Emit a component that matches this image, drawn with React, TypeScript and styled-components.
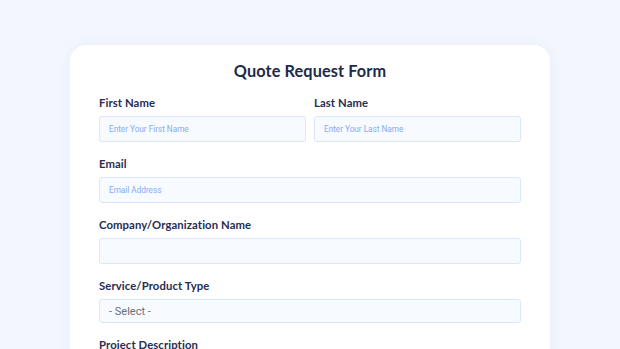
import styled, { createGlobalStyle } from 'styled-components'

const GlobalStyle = createGlobalStyle`
  html, body {
    margin: 0;
    padding: 0;
    height: 349px;
    overflow: hidden;
    background: #f3f6fd;
  }
  * {
    box-sizing: border-box;
  }
`

const Page = styled.div`
  width: 620px;
  height: 349px;
  padding-top: 45px;
  display: flex;
  justify-content: center;
  font-family: 'Lato', 'Noto Sans', sans-serif;
`

const Card = styled.form`
  width: 480px;
  height: 340px;
  background: #ffffff;
  border-radius: 16px;
  padding: 14px 29px 0;
  display: flex;
  flex-direction: column;
  gap: 13px;
  box-shadow: 0 0 12px rgba(180, 195, 230, 0.15);
`

const Title = styled.h1`
  margin: 0 0 -2px;
  font-size: 16.3px;
  line-height: 24px;
  font-weight: 700;
  color: #1e2a4a;
  text-align: center;
  letter-spacing: 0.1px;
`

const Row = styled.div`
  display: grid;
  grid-template-columns: 1fr 1fr;
  gap: 8px;
`

const Field = styled.div`
  display: flex;
  flex-direction: column;
  gap: 6px;
`

const Label = styled.label`
  font-size: 11.3px;
  line-height: 16px;
  font-weight: 700;
  color: #272d52;
  letter-spacing: 0.1px;
  padding-top: 1px;
  margin-bottom: -1px;
`

const Input = styled.input`
  height: 26px;
  width: 100%;
  border: 1px solid #dce7f9;
  border-radius: 3px;
  background: #f7faff;
  padding: 0 9px;
  font-family: 'Roboto', 'Noto Sans', sans-serif;
  font-size: 8.2px;
  color: #2a3350;
  outline: none;

  &::placeholder {
    color: #86abf2;
  }
`

const Select = styled.div`
  height: 24px;
  width: 100%;
  border: 1px solid #dce7f9;
  border-radius: 3px;
  background: #f7faff;
  padding: 0 9px;
  display: flex;
  align-items: center;
  font-family: 'Roboto', 'Noto Sans', sans-serif;
  font-size: 11px;
  color: #6b6e78;
`

export default function App() {
  return (
    <>
      <GlobalStyle />
      <Page>
        <Card>
          <Title>Quote Request Form</Title>
          <Row>
            <Field>
              <Label>First Name</Label>
              <Input placeholder="Enter Your First Name" />
            </Field>
            <Field>
              <Label>Last Name</Label>
              <Input placeholder="Enter Your Last Name" />
            </Field>
          </Row>
          <Field>
            <Label>Email</Label>
            <Input placeholder="Email Address" />
          </Field>
          <Field>
            <Label>Company/Organization Name</Label>
            <Input />
          </Field>
          <Field>
            <Label>Service/Product Type</Label>
            <Select>- Select -</Select>
          </Field>
          <Field>
            <Label>Project Description</Label>
          </Field>
        </Card>
      </Page>
    </>
  )
}
